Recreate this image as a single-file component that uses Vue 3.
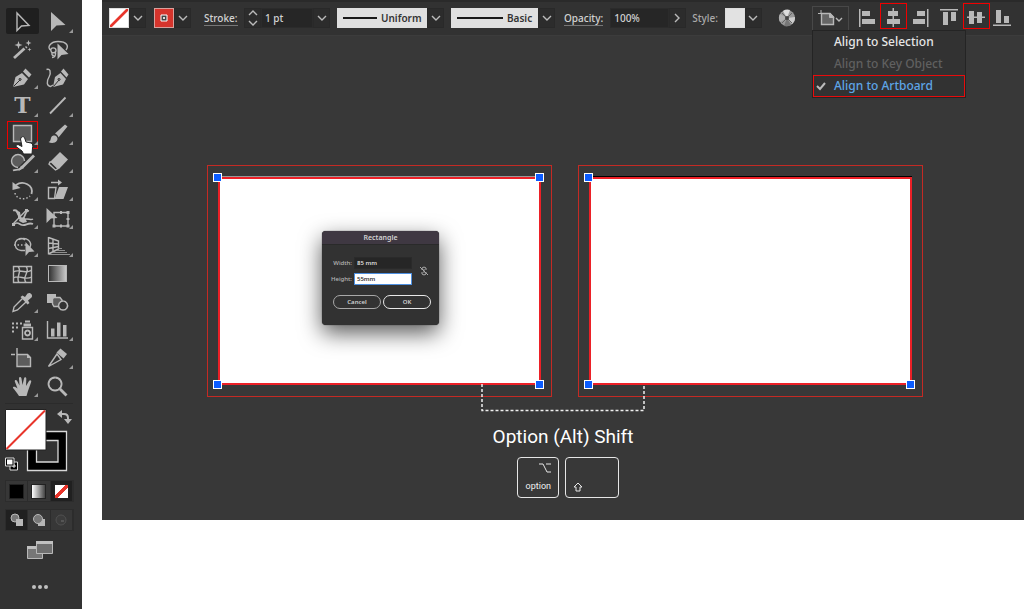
<script setup>
import { ref } from 'vue'

// Each shape is [class, path data]; icons are drawn in a 35 x 28 cell.
const tools = [
  { name: 'Selection', active: true, shapes: [['line', 'M12 6V23.500L16.500 19L24 18.500Z']] },
  { name: 'Direct Selection', more: true, shapes: [['fill', 'M11 5V24L16.500 18.500L25.500 18Z']] },
  { name: 'Magic Wand', shapes: [['thick', 'M9 23L19.500 13.500'], ['fill', 'M13.500 6L14.500 9L17.500 10L14.500 11L13.500 14L12.500 11L9.500 10L12.500 9ZM23.500 5L24.300 7.200L26.500 8L24.300 8.800L23.500 11L22.700 8.800L20.500 8L22.700 7.200ZM24.500 12.500L25 14L26.500 14.500L25 15L24.500 16.500L24 15L22.500 14.500L24 14ZM21 11L22.500 12.500L21.500 13.500L20 12Z']] },
  { name: 'Lasso', shapes: [['line', 'M11 15.500C6 12 11 6.500 18 6.500C27 6.500 29 11 26 15M11 15.500C10 12 16 12 16 15.500C16 18 11 19 11 15.500M15.500 17C16 20 15 22.500 12 22.500M12 18C11.500 20 13 21 14 20'], ['fill', 'M17.500 8.500V24.500L21.500 20L28.500 19Z']] },
  { name: 'Pen', more: true, shapes: [['fill', 'M8 24L10.500 14L17 10L23 16L19 21.500ZM18 8.500L20.500 5.500L26.500 11.500L24 14.500Z'], ['cut', 'M8.500 23.500L15 17M15 15.500a1 1 0 1 0 .1 0']] },
  { name: 'Curvature', shapes: [['fill', 'M13 24L15 14L20.500 10L26 16L23 21.500ZM21 8.500L23.500 5.500L28.500 11.500L26.500 14.500Z'], ['cut', 'M13.500 23.500L19 17M19 15.500a1 1 0 1 0 .1 0'], ['line', 'M6.500 6.500C10 5 11.500 9 9 14C6 19 7 23 10.500 23.500L13 22']] },
  { name: 'Type', more: true, letter: 'T', shapes: [] },
  { name: 'Line Segment', more: true, shapes: [['mid', 'M10 22.500L25.500 6.500']] },
  { name: 'Rectangle', more: true, marked: true, shapes: [['gray', 'M8.500 6.500H26.500V22.500H8.500Z'], ['hand', 'M16.500 18C18.500 17 19.500 18 20 20L21 23L26 24C28 24.500 28 27 27.500 29L27 35H18.500L17 32L11 27.500C10.500 25.500 13 25 15 26.500L17 27.500L15.500 20Z']] },
  { name: 'Paintbrush', more: true, shapes: [['fill', 'M8.500 23C12 22 9.500 17.500 13.500 16.500C16.500 16 18.500 19 17 21.500C15 24.500 11 24.500 8.500 23ZM15 14.500L25 5.500L27.500 7.500L18.500 18.500C18 16.500 17 15.500 15 14.500Z']] },
  { name: 'Shaper', more: true, shapes: [['gray', 'M19.500 14a6.500 6.500 0 1 0 -6.500 6.500'], ['thick', 'M29 8.500L17 20.500'], ['mid', 'M8 23.500C11 22 13 24 16 21'], ['fill', 'M16 18.500L19 21L13.500 24Z']] },
  { name: 'Eraser', more: true, shapes: [['fill', 'M20 5L28 12.500L19 22L10.500 14.500Z'], ['line', 'M10 15L9 17L15.500 23L18 21.500L11.500 15Z']] },
  { name: 'Rotate', more: true, shapes: [['mid', 'M11 10C18 5 29 10 26.500 19'], ['fill', 'M7.500 7V15L15.500 13Z'], ['dots', 'M10 18C11 24 20 26 25 21']] },
  { name: 'Shear', more: true, shapes: [['line', 'M8.500 12.500H16L14.500 23.500H8.500ZM11 7.500H19'], ['fill', 'M18 4.500L22 7.500L18 10.500ZM19 12H28L23.500 24H14.500Z']] },
  { name: 'Width', more: true, shapes: [['mid', 'M8 7.500C14 6 13 12 15 15C17 18 19 15 20 12C21 9 22 7.500 24 8M9 21.500C12 18 14 21 17 22C21 23 23 19 28 21'], ['line', 'M8 21L21 7.500M18 17C23 14 25 18 28 16'], ['fill', 'M20 6h3v3h-3zM7 20h3v3h-3zM13 13h3v3h-3zM10 7L15 9L16 14L13 13ZM15 14L20 15L22 19L18 20L14 18Z']] },
  { name: 'Free Transform', more: true, shapes: [['line', 'M14 9.500H28V23H14Z'], ['fill', 'M6.500 5V20L11 15.500L17.500 15ZM12.500 21.500h3v3h-3zM26.500 21.500h3v3h-3zM26.500 8h3v3h-3zM26.500 15h3v2h-3zM20 21.500h2v3h-2zM20 8h2v3h-2z']] },
  { name: 'Shape Builder', more: true, shapes: [['line', 'M20 9A6 6 0 1 0 16 19.500H20M14 8.500C22 5 28 11 24.500 17'], ['dots', 'M9 14H21'], ['fill', 'M20.500 11V25L24 21L29.500 20.500Z']] },
  { name: 'Perspective Grid', more: true, shapes: [['line', 'M8.500 6V23.500M8.500 6.500L18.500 10V18L8.500 23M13 8V20.500M8.500 12L18.500 13M8.500 17.500L18.500 15.500'], ['thin', 'M18.500 17.500H22M17 19.500H25M13 21.500H27M9 23.500H30']] },
  { name: 'Mesh', shapes: [['line', 'M8.500 7.500H26.500V23.500H8.500ZM8.500 13C14 9 20 16 26.500 11M8.500 19C14 15 20 22 26.500 18M13 7.500C18 13 10 18 14 23.500M21 7.500C26 13 16 18 21 23.500']] },
  { name: 'Gradient', gradient: true, shapes: [] },
  { name: 'Eyedropper', more: true, shapes: [['line', 'M17.500 11.500L9 20L8 24.500L12.500 23L21 15'], ['fill', 'M15.500 10L17.500 8.500L20 10L22.500 6.500C25 4.500 28.500 8 26.500 10.500L23 13.500L24.500 16L22.500 17.500Z']] },
  { name: 'Blend', shapes: [['fill', 'M7 7H16V16H7Z'], ['gray', 'M13.500 10.500H20L22 13V18L19 19.500H14L12.500 17V12Z'], ['ring', 'M23 14a4.500 4.500 0 1 0 .1 0']] },
  { name: 'Symbol Sprayer', more: true, shapes: [['line', 'M17.500 12.500H27.500V24H17.500Z'], ['fill', 'M18.500 8.500H26V11.500H18.500ZM20 5.500H25V7.500H20ZM7 7.500h2v2h-2zM11 7.500h2v2h-2zM15 7.500h2v2h-2zM7 11.500h2v2h-2zM11 11.500h2v2h-2zM7 15.500h2v2h-2z'], ['mid', 'M22.500 15.500a2.500 2.500 0 1 0 .1 0']] },
  { name: 'Column Graph', more: true, shapes: [['line', 'M7.500 6V23H28'], ['fill', 'M11 13.500h3.500v8h-3.500zM17 7.500h3.500v14h-3.500zM23 10h3.500v11.500h-3.500z']] },
  { name: 'Artboard', shapes: [['line', 'M12 5V11M6 11.500H10'], ['gray', 'M12 11.500H22.500L25.500 14.500V23.500H12Z'], ['fill', 'M22 11V15H26Z']] },
  { name: 'Slice', more: true, shapes: [['line', 'M17 11L8.500 23.500L21 16.500Z'], ['fill', 'M16.500 9.500L20.500 5.500L27 11L23.500 15.500Z']] },
  { name: 'Hand', more: true, shapes: [['fill', 'M14 25C12 22 10 19 8 17C7.500 15.500 10 15 12.500 17.500L9.800 10.500C9.500 8.500 11.500 8.500 12.200 10L14.500 14.500L14 7.500C14 5.500 16 5.500 16.500 7.500L17.500 14L19 7.500C19.500 5.500 21.500 6 21.300 8L21 15L24 10C25 8.500 27 9.500 26 11.500L23 20C22.500 22 22 23 21.500 25Z']] },
  { name: 'Zoom', shapes: [['mid', 'M15 6.500a6.500 6.500 0 1 0 .1 0'], ['thick', 'M20 18L26.500 24.500']] }
]

const alignTo = ref('Align to Artboard')
const alignOptions = [
  { text: 'Align to Selection' },
  { text: 'Align to Key Object', disabled: true },
  { text: 'Align to Artboard' }
]
const aligns = [
  { name: 'Align left', d: 'M6 6h1.500v18h-1.500zM9 8h8v5h-8zM9 16h13v5h-13z' },
  { name: 'Align horizontal center', d: 'M12.500 5h1.500v19h-1.500zM8 8h10v5h-10zM7 16h13v5h-13z', marked: true },
  { name: 'Align right', d: 'M20 6h1.500v18h-1.500zM10 8h8v5h-8zM6 16h12v5h-12z' },
  { name: 'Align top', d: 'M4 6h18v1.500h-18zM7 9h5v13h-5zM15 9h5v9h-5z', apart: true },
  { name: 'Align vertical center', d: 'M4 13.500h18v1.500h-18zM6 8h5v13h-5zM14 9h5v11h-5z', marked: true },
  { name: 'Align bottom', d: 'M3 21.500h18v1.500h-18zM6 7h5v13h-5zM14 13h5v7h-5z' }
]
const weight = ref('1 pt')
const opacity = ref('100%')
const width = ref('85 mm')
const height = ref('55mm')
</script>

<template>
  <div class="page">
    <aside class="sidebar">
      <div class="tools">
        <button v-for="t in tools" :key="t.name" type="button" class="tool" :class="{ active: t.active, marked: t.marked }" :aria-label="t.name">
          <span v-if="t.letter" class="letter">{{ t.letter }}</span>
          <span v-else-if="t.gradient" class="gradient"></span>
          <svg class="glyph" width="35" height="28" viewBox="0 0 35 28">
            <path v-for="(s, i) in t.shapes" :key="i" :class="s[0]" :d="s[1]" />
            <path v-if="t.more" class="more" d="M29 26h4v-4z" />
          </svg>
        </button>
      </div>

      <div class="colors">
        <svg width="70" height="64" viewBox="0 0 70 64">
          <path d="M22 22H62V62H22ZM31 31V53H53V31Z" fill="#000" fill-rule="evenodd" />
          <path d="M22.500 22.500H61.500V61.500H22.500ZM31.500 31.500V53H53V31.500Z" fill="none" stroke="#d8d8d8" stroke-width="1.3" />
          <path d="M.5 .5H41V41H.5Z" fill="#fff" stroke="#222" />
          <path d="M1.500 40L40 1.500" stroke="#e8352b" stroke-width="2" />
          <path d="M55 5H59Q63 5 63 9V11" fill="none" stroke="#b8b8b8" stroke-width="2" />
          <path d="M57 1V9L52 5ZM59 10H67L63 15Z" fill="#b8b8b8" />
          <path d="M5 53H12.500V61H5Z" fill="#000" stroke="#ddd" />
          <path d="M8 56H10V58H8Z" fill="#333" stroke="#ddd" />
          <path d="M.5 49H9V57H.5Z" fill="#000" stroke="#ddd" />
          <path d="M2 50.500H7.500V55.500H2Z" fill="#fff" />
        </svg>
      </div>

      <div class="triple">
        <button type="button" aria-label="Color"><span class="chip black"></span></button>
        <button type="button" aria-label="Gradient fill"><span class="chip fade"></span></button>
        <button type="button" class="on" aria-label="None"><span class="chip none"></span></button>
      </div>
      <div class="triple">
        <button type="button" class="on" aria-label="Draw normal">
          <svg width="14" height="14"><circle cx="5" cy="5" r="4" fill="#777" stroke="#b8b8b8" /><path d="M6 6h7v7h-7z" fill="#b8b8b8" /></svg>
        </button>
        <button type="button" aria-label="Draw behind">
          <svg width="14" height="14"><path d="M6 6h7v7h-7z" fill="#b8b8b8" /><circle cx="6" cy="6" r="4.500" fill="#777" stroke="#b8b8b8" /></svg>
        </button>
        <button type="button" aria-label="Draw inside">
          <svg width="14" height="14"><circle cx="7" cy="7" r="5" fill="#3c3c3c" stroke="#505050" /><path d="M7 7h3v2h-3z" fill="#555" /></svg>
        </button>
      </div>
      <button type="button" class="screen" aria-label="Screen mode">
        <svg width="28" height="20"><path d="M1.500 6.500h15v12h-15z" fill="#777" stroke="#b8b8b8" /><path d="M1 6h16v3h-16z" fill="#c0c0c0" /><path d="M10.500 1.500h16v12h-16z" fill="#6f6f6f" stroke="#b8b8b8" /><path d="M10 1h17v3h-17z" fill="#c0c0c0" /></svg>
      </button>
      <button type="button" class="dots3" aria-label="Edit toolbar">
        <svg width="18" height="6" fill="#c0c0c0"><circle cx="3" cy="3" r="2" /><circle cx="9" cy="3" r="2" /><circle cx="15" cy="3" r="2" /></svg>
      </button>
    </aside>

    <main class="main">
      <header class="bar">
        <button type="button" class="swatch none" aria-label="Fill color"></button>
        <button type="button" class="chev" aria-label="Fill options"><svg width="8" height="5"><path d="M0 0L4 4L8 0" /></svg></button>
        <button type="button" class="swatch red" aria-label="Stroke color">
          <svg width="18" height="18"><path d="M6 6h6v6h-6z" fill="#444" stroke="#fff" /><path d="M8 8h2v2h-2z" fill="#ddd" /></svg>
        </button>
        <button type="button" class="chev" aria-label="Stroke options"><svg width="8" height="5"><path d="M0 0L4 4L8 0" /></svg></button>
        <label class="label under stroke-label" for="weight">Stroke:</label>
        <button type="button" class="chev" aria-label="Step weight"><svg width="8" height="14"><path d="M0 4L4 0L8 4M0 10L4 14L8 10" /></svg></button>
        <input id="weight" v-model="weight" class="field" type="text">
        <button type="button" class="chev" aria-label="Weight presets"><svg width="8" height="5"><path d="M0 0L4 4L8 0" /></svg></button>
        <div class="combo">
          <span class="rule"></span>
          <select aria-label="Width profile"><option>Uniform</option></select>
        </div>
        <span class="chev"><svg width="8" height="5"><path d="M0 0L4 4L8 0" /></svg></span>
        <div class="combo basic">
          <span class="rule"></span>
          <select aria-label="Brush definition"><option>Basic</option></select>
        </div>
        <span class="chev"><svg width="8" height="5"><path d="M0 0L4 4L8 0" /></svg></span>
        <label class="label under opacity-label" for="opacity">Opacity:</label>
        <input id="opacity" v-model="opacity" class="field wide" type="text">
        <button type="button" class="chev" aria-label="Opacity slider"><svg width="5" height="8"><path d="M0 0L4 4L0 8" /></svg></button>
        <span class="label style-label">Style:</span>
        <button type="button" class="swatch pale" aria-label="Graphic style"></button>
        <button type="button" class="chev" aria-label="Style options"><svg width="8" height="5"><path d="M0 0L4 4L8 0" /></svg></button>
        <button type="button" class="wheel" aria-label="Recolor artwork">
          <svg width="18" height="18"><circle cx="9" cy="9" r="8" fill="#999" /><path d="M9 9L5 2A8 8 0 0 1 12 1Z" fill="#ddd" /><path d="M9 9L17 8A8 8 0 0 1 14 15Z" fill="#ccc" /><path d="M9 9L2 13A8 8 0 0 1 2 5Z" fill="#b0b0b0" /><path d="M9 9L13 16A8 8 0 0 1 6 17Z" fill="#777" /><path d="M4 4L14 14M14 4L4 14" stroke="#666" /><circle cx="9" cy="9" r="2" fill="#444" /></svg>
        </button>
        <div class="align-to">
          <button type="button" class="align-button" aria-label="Align to" aria-expanded="true">
            <svg width="26" height="18" fill="none" stroke="#b8b8b8"><path d="M4 1V4M1 4.500H4" /><path d="M4.500 4.500H13L16.500 8V15.500H4.500Z" fill="#666" stroke-width="1.400" /><path d="M12.500 4V8.500H17Z" fill="#b8b8b8" /><path d="M19 9L22 12L25 9" stroke-width="1.400" /></svg>
          </button>
          <div class="menu" role="menu">
            <button v-for="o in alignOptions" :key="o.text" type="button" role="menuitemradio" :aria-checked="alignTo === o.text" :disabled="o.disabled" :class="{ chosen: alignTo === o.text }" @click="alignTo = o.text">
              <svg class="tick" width="12" height="10"><path v-if="alignTo === o.text" d="M2 5L5 8L10 2" /></svg>
              <span>{{ o.text }}</span>
            </button>
          </div>
        </div>
        <div class="aligns">
          <button v-for="a in aligns" :key="a.name" type="button" :class="{ marked: a.marked, apart: a.apart }" :aria-label="a.name">
            <svg width="27" height="26" viewBox="0 0 27 26"><path :d="a.d" fill="#b8b8b8" /></svg>
          </button>
        </div>
      </header>

      <section class="canvas">
        <div class="boards">
          <div class="bleed">
            <div class="board first">
              <i class="handle tl"></i><i class="handle tr"></i><i class="handle bl"></i><i class="handle br"></i>
              <form class="dialog" @submit.prevent>
                <h2>Rectangle</h2>
                <div class="dialog-body">
                  <div class="fields">
                    <label for="w">Width:</label><input id="w" v-model="width" type="text">
                    <label for="h">Height:</label><input id="h" v-model="height" class="focus" type="text">
                  </div>
                  <svg class="link" width="8" height="10"><path d="M2 4V2Q4 0 6 2V4M2 6V8Q4 10 6 8V6M4 3V7M0 1L8 9" /></svg>
                </div>
                <div class="actions">
                  <button type="button">Cancel</button>
                  <button type="submit" class="ok">OK</button>
                </div>
              </form>
            </div>
          </div>
          <div class="bleed">
            <div class="board second">
              <i class="handle tl"></i><i class="handle bl"></i><i class="handle br"></i>
            </div>
          </div>
        </div>
        <svg class="connector" width="164" height="28"><path d="M1 0V26.500H163V0" /></svg>
        <p class="caption">Option (Alt) Shift</p>
        <div class="keys">
          <kbd class="key option">
            <svg width="12" height="10"><path d="M0 1H4L8 9H12M7 1H12" /></svg>
            <span>option</span>
          </kbd>
          <kbd class="key shift">
            <svg width="10" height="10"><path d="M5 1L9 5H7V9H3V5H1Z" /></svg>
          </kbd>
        </div>
      </section>
    </main>
  </div>
</template>

<style>
body { background: #fff; }
</style>

<style scoped>
* { box-sizing: border-box; }
button { padding: 0; border: 0; background: none; font: inherit; color: inherit; }
svg { display: block; flex: none; }
input, select { font: inherit; border-radius: 0; outline: 0; }

.page { display: flex; gap: 20px; min-height: 100vh; font: 500 10px/16px "Noto Sans", "Open Sans", sans-serif; color: #d2d2d2; }

.sidebar { flex: none; width: 82px; padding: 7px 0 0 5px; background: #323232; }
.tools { display: grid; grid-template-columns: 35px 35px; grid-auto-rows: 28px; padding-bottom: 4px; }
.tool { position: relative; display: flex; align-items: center; justify-content: center; }
.tool.active::before { content: ""; position: absolute; inset: 1px; background: #1f1f1f; border-radius: 2px; }
.tool.marked { z-index: 1; }
.tool.marked::before { content: ""; position: absolute; inset: 2px 2px -2px 2px; border: 1px solid #f00000; }
.glyph { position: absolute; inset: 0; overflow: visible; fill: none; stroke: #b8b8b8; }
.glyph .fill, .glyph .more { fill: #b8b8b8; stroke: none; }
.glyph .more { fill: #999; }
.glyph .line { stroke-width: 1.4; }
.glyph .mid { stroke-width: 1.8; }
.glyph .thick { stroke-width: 2.8; }
.glyph .thin { stroke: #909090; }
.glyph .cut { stroke: #323232; }
.glyph .gray { fill: #5c5c5c; stroke-width: 1.4; }
.glyph .ring { fill: #323232; stroke-width: 1.5; }
.glyph .dots { stroke-width: 1.5; stroke-dasharray: 1.5 2; }
.glyph .hand { fill: #fff; stroke: #222; }
.letter { font: bold 22px/28px "DejaVu Serif", serif; color: #b8b8b8; }
.gradient { width: 19px; height: 17px; border: 1px solid #b8b8b8; background: linear-gradient(90deg, #333, #c8c8c8); }

.colors { padding-top: 5px; margin-right: 9px; border-top: 1px solid #2b2b2b; }
.triple { display: flex; width: 69px; margin-top: 7px; border: 1px solid #2c2c2c; }
.triple button { flex: 1; display: flex; align-items: center; justify-content: center; height: 20px; background: #373737; border-right: 1px solid #2c2c2c; }
.triple .on { background: #202020; }
.chip { width: 15px; height: 15px; border: 1px solid #222; }
.black { background: #000; }
.fade { background: linear-gradient(90deg, #fff, #444); }
.none { background: linear-gradient(to bottom right, #fff 44%, #e8352b 45%, #e8352b 55%, #fff 56%); }
.chip.none { background: linear-gradient(to bottom right, #fff 40%, #e8352b 41%, #e8352b 59%, #fff 60%); }
.screen { display: block; margin: 9px 0 0 21px; }
.dots3 { display: block; margin: 24px 0 0 26px; }

.main { flex: 1; min-width: 0; align-self: flex-start; background: #383838; }
.bar { display: flex; align-items: center; height: 36px; padding: 2px 0 3px 7px; background: #323232; border-top: 2px solid #2a2a2a; border-bottom: 1px solid #3c3c3c; }
.bar > * { flex: none; }
.swatch { width: 20px; height: 20px; border: 1px solid #ddd; }
.chev + .swatch { margin-left: 8px; }
.swatch.red { background: #d6342c; border-color: #d8a09c; }
.pale { background: #e2e2e2; }
.chev { display: flex; align-items: center; justify-content: center; width: 17px; height: 20px; background: #2c2c2c; border: 1px solid #292929; }
.chev svg, .tick { fill: none; stroke: #bbb; stroke-width: 1.4; overflow: visible; }
.tick { stroke-width: 2; }
.label { line-height: 14px; }
.under { border-bottom: 1px solid #777; }
.stroke-label { width: 34px; margin: 0 6px 0 13px; }
.field { width: 52px; height: 20px; padding: 0 3px; border: 1px solid #2b2b2b; background: #262626; color: #d2d2d2; }
.field.wide { width: 59px; }
.combo { display: flex; align-items: center; width: 90px; height: 20px; margin-left: 7px; padding: 0 5px 0 6px; gap: 4px; background: #e0e0e0; }
.basic { width: 87px; }
.rule { flex: 1; height: 2px; background: #1a1a1a; }
.combo select { appearance: none; padding: 0; border: 0; background: none; color: #333; font-weight: 600; }
.opacity-label { margin: 0 7px 0 9px; }
.style-label { margin: 0 7px 0 6px; color: #aaa; }
.wheel { margin-left: 16px; }
.align-to { position: relative; margin-left: 16px; }
.align-button { display: flex; align-items: center; justify-content: center; width: 37px; height: 25px; border: 1px solid #484848; }
.menu { position: absolute; z-index: 2; top: 24px; left: 0; width: 154px; background: #323232; border: 1px solid #242424; }
.menu button { display: flex; align-items: center; gap: 7px; width: 100%; height: 22px; padding-left: 2px; font-size: 12px; color: #e6e6e6; white-space: nowrap; }
.menu button:disabled { color: #606060; }
.menu .chosen { color: #5ea5e6; border: 1px solid #e80c0c; padding-left: 1px; }
.aligns { display: flex; align-self: flex-start; margin-left: 4px; margin-top: -1px; }
.aligns button { width: 27px; height: 26px; }
.aligns .marked { outline: 1px solid #f00000; outline-offset: -1px; }
.aligns .apart { margin-left: 2px; }

.canvas { padding: 129px 0 22px; }
.boards { display: flex; gap: 26px; padding: 0 101px 0 105px; }
.bleed { flex: 1; padding: 11px 10px; border: 1px solid #c42a24; }
.board { position: relative; display: flex; align-items: center; justify-content: center; aspect-ratio: 323 / 208; padding: 0 0 6px 2px; background: #fff; border: 2px solid #ec2027; }
.first { box-shadow: 0 -1px #999; }
.second { box-shadow: 0 -1px #000; }
.handle { position: absolute; width: 9px; height: 9px; background: #0b5cff; border: 1px solid #fff; }
.tl, .tr { top: -6px; }
.bl, .br { bottom: -6px; }
.tl, .bl { left: -7px; }
.tr, .br { right: -5px; }

.dialog { width: 117px; height: 94px; border-radius: 4px; background: #323232; box-shadow: 0 8px 22px rgba(0, 0, 0, .65), 0 0 1px #222; font-size: 6px; line-height: 12px; overflow: hidden; }
.dialog h2 { margin: 0; height: 14px; font-size: 7px; line-height: 14px; font-weight: 600; text-align: center; background: #3f3842; border-bottom: 1px solid #2a2a2a; }
.dialog-body { display: flex; align-items: center; gap: 8px; padding: 12px 0 0 8px; }
.fields { display: grid; grid-template-columns: 22px 58px; column-gap: 2px; row-gap: 4px; }
.fields label { text-align: right; color: #b8b8b8; }
.fields input { width: 100%; height: 12px; padding: 0 2px; border: 1px solid #2a2a2a; background: #262626; color: #ddd; font-weight: 600; }
.fields .focus { background: #fff; border-color: #4d8fe0; color: #333; }
.link { fill: none; stroke: #aaa; }
.actions { display: flex; gap: 2px; padding: 10px 8px 0 11px; }
.actions button { flex: 1; height: 14px; border: 1px solid #a8a8a8; border-radius: 7px; line-height: 12px; font-weight: 600; }
.actions .ok { border-color: #e8e8e8; }

.connector { position: relative; margin: -13px auto 0; fill: none; stroke: #eee; stroke-width: 1.5; stroke-dasharray: 3 2; }
.caption { margin: 13px 0 8px; font: 400 19px/24px Roboto, "Liberation Sans", sans-serif; color: #fff; text-align: center; }
.keys { display: flex; justify-content: center; gap: 6px; padding-left: 10px; }
.key { display: flex; flex-direction: column; justify-content: space-between; height: 41px; padding: 5px 7px; border: 1px solid #e6e6e6; border-radius: 4px; font: 9px/12px Roboto, "Liberation Sans", sans-serif; color: #f0f0f0; }
.key svg { fill: none; stroke: #e6e6e6; }
.option { width: 42px; align-items: flex-end; }
.shift { width: 54px; justify-content: flex-end; }
</style>
